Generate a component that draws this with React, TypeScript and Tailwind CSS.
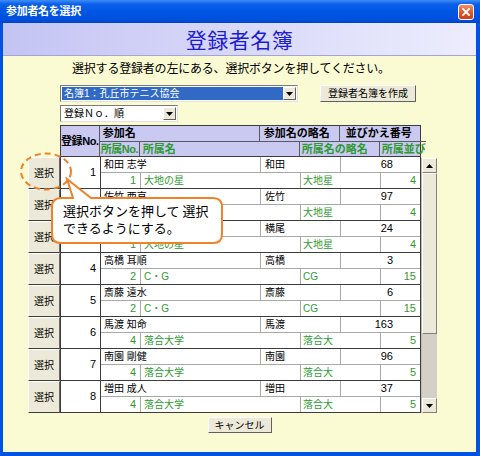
import React from "react";

type Rec = {
  no: number;
  name: string;
  ryaku: string;
  bango: string;
  sNo: string;
  sName: string;
  sRyaku: string;
  narabi: string;
};

const recs: Rec[] = [
  { no: 1, name: "和田 志学", ryaku: "和田", bango: "68", sNo: "1", sName: "大地の星", sRyaku: "大地星", narabi: "4" },
  { no: 2, name: "佐竹 西京", ryaku: "佐竹", bango: "97", sNo: "1", sName: "大地の星", sRyaku: "大地星", narabi: "4" },
  { no: 3, name: "横尾 而立", ryaku: "横尾", bango: "24", sNo: "1", sName: "大地の星", sRyaku: "大地星", narabi: "4" },
  { no: 4, name: "高橋 耳順", ryaku: "高橋", bango: "3", sNo: "2", sName: "C・G", sRyaku: "CG", narabi: "15" },
  { no: 5, name: "斎藤 遠水", ryaku: "斎藤", bango: "6", sNo: "2", sName: "C・G", sRyaku: "CG", narabi: "15" },
  { no: 6, name: "馬渡 知命", ryaku: "馬渡", bango: "163", sNo: "4", sName: "落合大学", sRyaku: "落合大", narabi: "5" },
  { no: 7, name: "南園 剛健", ryaku: "南園", bango: "96", sNo: "4", sName: "落合大学", sRyaku: "落合大", narabi: "5" },
  { no: 8, name: "増田 成人", ryaku: "増田", bango: "37", sNo: "4", sName: "落合大学", sRyaku: "落合大", narabi: "5" },
];

function ArrowBtn() {
  return (
    <div className="w-[13px] h-full bg-[#ece9d8] border-t border-l border-t-white border-l-white border-r border-b border-r-[#606060] border-b-[#606060] flex items-center justify-center">
      <svg width="7" height="4" viewBox="0 0 7 4">
        <path d="M0 0 H7 L3.5 4 Z" fill="#000" />
      </svg>
    </div>
  );
}

function RecordRow({ r }: { r: Rec }) {
  return (
    <div className="flex h-[32px]">
      <div className="w-[32px] h-[32px] bg-[#ece9d8] border-t border-l border-t-white border-l-white border-r border-r-[#6a6a6a] border-b border-b-[#3c3c3c] flex items-center justify-center text-[10px] text-black">
        選択
      </div>
      <div className="w-[361px] h-[32px] flex bg-white border-l border-r border-b border-[#3c3c3c]">
        <div className="w-[40px] border-r border-[#3c3c3c] flex items-center justify-end pr-[4px] text-[11px] text-black">
          {r.no}
        </div>
        <div className="flex-1 flex flex-col">
          <div className="h-[16px] flex border-b border-[#a8a8a8] text-black">
            <div className="w-[160px] border-r border-[#a8a8a8] pl-[3px] text-[10px] leading-[15px] whitespace-nowrap overflow-hidden">
              {r.name}
            </div>
            <div className="w-[80px] border-r border-[#a8a8a8] pl-[4px] text-[10px] leading-[15px] whitespace-nowrap overflow-hidden">
              {r.ryaku}
            </div>
            <div className="flex-1 text-right pr-[27px] text-[11px] leading-[15px]">{r.bango}</div>
          </div>
          <div className="h-[15px] flex text-[#2f9a2f]">
            <div className="w-[40px] border-r border-[#a8a8a8] text-right pr-[4px] text-[11px] leading-[15px]">
              {r.sNo}
            </div>
            <div className="w-[160px] border-r border-[#a8a8a8] pl-[3px] text-[10px] leading-[15px] whitespace-nowrap overflow-hidden">
              {r.sName}
            </div>
            <div className="w-[80px] border-r border-[#a8a8a8] pl-[2px] text-[10px] leading-[15px] whitespace-nowrap overflow-hidden">
              {r.sRyaku}
            </div>
            <div className="flex-1 text-right pr-[4px] text-[11px] leading-[15px]">{r.narabi}</div>
          </div>
        </div>
      </div>
    </div>
  );
}

function Scrollbar() {
  return (
    <div className="mt-[1px] w-[16px] h-[255px] flex flex-col bg-[#d4d0c8] border-l border-[#c0bdb4]">
      <div className="h-[15px] bg-[#ece9d8] border-t border-l border-t-white border-l-white border-r border-b border-r-[#808080] border-b-[#808080] flex items-center justify-center">
        <svg width="7" height="4" viewBox="0 0 7 4">
          <path d="M0 4 H7 L3.5 0 Z" fill="#000" />
        </svg>
      </div>
      <div className="h-[161px] bg-[#ece9d8] border-t border-l border-t-white border-l-white border-r border-b border-r-[#808080] border-b-[#808080]" />
      <div className="flex-1 bg-[#d4d0c8]" />
      <div className="h-[15px] bg-[#ece9d8] border-t border-l border-t-white border-l-white border-r border-b border-r-[#808080] border-b-[#808080] flex items-center justify-center">
        <svg width="7" height="4" viewBox="0 0 7 4">
          <path d="M0 0 H7 L3.5 4 Z" fill="#000" />
        </svg>
      </div>
    </div>
  );
}

export default function App() {
  return (
    <div className="relative w-[480px] h-[456px] flex flex-col bg-[#0053e0] font-['Liberation_Sans','Noto_Sans_CJK_JP',sans-serif] overflow-hidden">
      {/* Title bar */}
      <div className="h-[23px] flex items-center justify-between pl-[6px] pr-[6px] bg-[linear-gradient(180deg,#3d8ef8_0%,#0b5fe9_18%,#0056e5_50%,#0050dc_85%,#0044c6_100%)]">
        <span className="text-white font-bold text-[11px] tracking-[-0.3px] leading-none">参加者名を選択</span>
        <div className="w-[16px] h-[16px] mt-[1px] rounded-[3px] border border-white bg-[linear-gradient(180deg,#f0906a_0%,#e05a2e_50%,#c8401c_100%)] flex items-center justify-center">
          <svg width="8" height="8" viewBox="0 0 8 8">
            <path d="M1 1 L7 7 M7 1 L1 7" stroke="#fff" strokeWidth="1.8" strokeLinecap="square" />
          </svg>
        </div>
      </div>

      {/* Frame */}
      <div className="flex-1 flex flex-col ml-[3px] mr-[4px] mb-[4px]">
        {/* Header panel */}
        <div className="h-[33px] bg-linear-to-r from-[#c4c4f4] to-[#ededfd] border-b border-[#a4a4d8] flex items-center justify-center">
          <span className="text-[21px] leading-none text-[#1c1cd0] font-['Noto_Sans_CJK_JP',sans-serif] tracking-[0.5px]">
            登録者名簿
          </span>
        </div>

        {/* Body */}
        <div className="flex-1 bg-[#fbfbd3] flex flex-col">
          <div className="mt-[5px] h-[16px] pl-[69px] text-[12px] leading-[16px] tracking-[-0.2px] text-black whitespace-nowrap">
            選択する登録者の左にある、選択ボタンを押してください。
          </div>

          <div className="mt-[8px] pl-[57px] flex items-center">
            <div className="w-[238px] h-[17px] flex bg-white border-t border-l border-t-[#7a7a7a] border-l-[#7a7a7a] border-r border-b border-r-[#e0e0e0] border-b-[#e0e0e0] p-[1px]">
              <div className="flex-1 bg-[#316ac5] text-white text-[10px] leading-[13px] pl-[2px] whitespace-nowrap overflow-hidden">
                名簿1：孔丘市テニス協会
              </div>
              <ArrowBtn />
            </div>
            <div className="ml-[22px] w-[96px] h-[17px] bg-[#ece9d8] border-t border-l border-t-white border-l-white border-r border-b border-r-[#606060] border-b-[#606060] flex items-center justify-center text-[10px] text-black whitespace-nowrap">
              登録者名簿を作成
            </div>
          </div>

          <div className="mt-[3px] pl-[57px] flex">
            <div className="w-[118px] h-[17px] flex bg-white border-t border-l border-t-[#7a7a7a] border-l-[#7a7a7a] border-r border-b border-r-[#e0e0e0] border-b-[#e0e0e0] p-[1px]">
              <div className="flex-1 text-black text-[10px] leading-[13px] pl-[2px] whitespace-nowrap overflow-hidden">
                登録Ｎｏ．順
              </div>
              <ArrowBtn />
            </div>
          </div>

          {/* Table area */}
          <div className="mt-[3px] pl-[25px] flex flex-col">
            <div className="flex">
              <div className="w-[32px]" />
              <div className="w-[361px] h-[32px] flex bg-[#c9c9f2] border border-[#3c3c3c] font-bold">
                <div className="w-[40px] border-r border-[#5a5a5a] flex items-center justify-center text-[11px] tracking-[-0.4px] text-black whitespace-nowrap">
                  登録No.
                </div>
                <div className="flex-1 flex flex-col">
                  <div className="h-[16px] flex border-b border-[#5a5a5a] text-black text-[11px] leading-[15px]">
                    <div className="w-[160px] border-r border-[#5a5a5a] pl-[3px] whitespace-nowrap">参加名</div>
                    <div className="w-[80px] border-r border-[#5a5a5a] pl-[4px] whitespace-nowrap">参加名の略名</div>
                    <div className="flex-1 pl-[6px] whitespace-nowrap overflow-hidden">並びかえ番号</div>
                  </div>
                  <div className="h-[14px] flex text-[#2f9a2f] text-[11px] leading-[14px]">
                    <div className="w-[40px] border-r border-[#5a5a5a] pl-[1px] whitespace-nowrap overflow-hidden tracking-[-0.5px]">所属No.</div>
                    <div className="w-[160px] border-r border-[#5a5a5a] pl-[3px] whitespace-nowrap">所属名</div>
                    <div className="w-[80px] border-r border-[#5a5a5a] pl-[2px] whitespace-nowrap">所属名の略名</div>
                    <div className="flex-1 pl-[2px] whitespace-nowrap overflow-hidden">所属並び</div>
                  </div>
                </div>
              </div>
            </div>
            <div className="flex">
              <div className="flex flex-col">
                {recs.map((r) => (
                  <RecordRow key={r.no} r={r} />
                ))}
              </div>
              <Scrollbar />
            </div>
          </div>

          <div className="mt-[4px] flex justify-center">
            <div className="w-[64px] h-[16px] bg-[#ece9d8] border-t border-l border-t-white border-l-white border-r border-b border-r-[#606060] border-b-[#606060] flex items-center justify-center text-[10px] text-black">
              キャンセル
            </div>
          </div>
        </div>
      </div>

      {/* Callout overlay */}
      <svg className="absolute left-0 top-0 pointer-events-none" width="480" height="456">
        <ellipse cx="46" cy="171.5" rx="25" ry="18" fill="none" stroke="#f0822a" strokeWidth="2" strokeDasharray="6 4" />
        <path
          d="M61 198 L73 198 L67 179 L91 198 L213 198 Q222 198 222 207 L222 234 Q222 243 213 243 L61 243 Q52 243 52 234 L52 207 Q52 198 61 198 Z"
          fill="#ffffff"
          stroke="#f0822a"
          strokeWidth="2"
        />
      </svg>
      <div className="absolute left-[63px] top-[202px] text-[13px] leading-[17px] text-black whitespace-nowrap font-['Noto_Sans_CJK_JP',sans-serif]">
        選択ボタンを押して 選択
        <br />
        できるようにする。
      </div>
    </div>
  );
}
